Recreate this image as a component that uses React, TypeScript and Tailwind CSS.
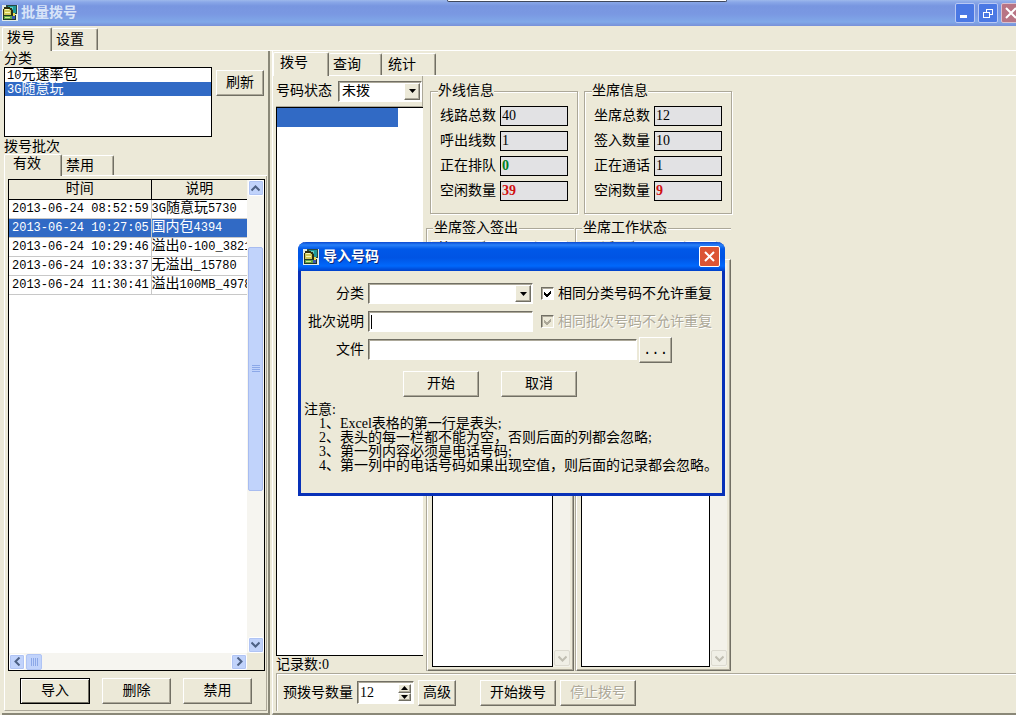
import type { ReactNode } from "react";

const batches = [
  { time: "2013-06-24 08:52:59", note: "3G随意玩5730" },
  { time: "2013-06-24 10:27:05", note: "国内包4394" },
  { time: "2013-06-24 10:29:46", note: "溢出0-100_3821" },
  { time: "2013-06-24 10:33:37", note: "无溢出_15780" },
  { time: "2013-06-24 11:30:41", note: "溢出100MB_4978" },
];

const lines = [
  { id: "line-total", label: "线路总数", value: "40", tone: "" },
  { id: "line-out", label: "呼出线数", value: "1", tone: "" },
  { id: "line-queue", label: "正在排队", value: "0", tone: "font-bold text-[#008020]" },
  { id: "line-free", label: "空闲数量", value: "39", tone: "font-bold text-[#d01010]" },
];

const seats = [
  { id: "seat-total", label: "坐席总数", value: "12", tone: "" },
  { id: "seat-in", label: "签入数量", value: "10", tone: "" },
  { id: "seat-talk", label: "正在通话", value: "1", tone: "" },
  { id: "seat-free", label: "空闲数量", value: "9", tone: "font-bold text-[#d01010]" },
];

const notes = [
  "1、Excel表格的第一行是表头;",
  "2、表头的每一栏都不能为空，否则后面的列都会忽略;",
  "3、第一列内容必须是电话号码;",
  "4、第一列中的电话号码如果出现空值，则后面的记录都会忽略。",
];

const raised =
  "border border-t-white border-l-white border-r-[#716f64] border-b-[#716f64] shadow-[inset_-1px_-1px_0_#aca899]";
const sunken =
  "border border-t-[#716f64] border-l-[#716f64] border-r-white border-b-white bg-white shadow-[inset_1px_1px_0_#aca899]";
const groove = "border border-[#aca899] shadow-[1px_1px_0_#fff,inset_1px_1px_0_#fff]";

const AppIcon = () => (
  <svg width="16" height="16" viewBox="0 0 16 16" className="shrink-0" shapeRendering="crispEdges">
    <rect width="16" height="16" fill="#e4ece8" />
    <path d="M4 0h11v9H4z" fill="#284840" />
    <path d="M6 1h8v7H6z" fill="#209898" />
    <path d="M7 2h4v2H7z" fill="#68d0c0" />
    <path d="M1 4h1V2h6v1h2v2h1v6H1z" fill="#303010" />
    <path d="M2 4h6v1h1v5H2z" fill="#d0c858" />
    <path d="M3 4h4v1H3zM3 7h5v1H3z" fill="#f8f8b8" />
    <path d="M1 10h13v5H1z" fill="#203828" />
    <path d="M2 11h8v3H2z" fill="#60a848" />
    <path d="M3 12h5v1H3z" fill="#d8e890" />
    <path d="M10 11h3v3h-3z" fill="#3858b0" />
    <path d="M11 8h2v3h-2z" fill="#e8d850" />
  </svg>
);

const Chevron = ({ d, color = "#4d6185" }: { d: string; color?: string }) => (
  <svg width="9" height="9" viewBox="0 0 9 9" fill="none" stroke={color} strokeWidth="2">
    <path d={d} />
  </svg>
);

const up = "M0.5 6.5l4-4 4 4";
const down = "M0.5 2.5l4 4 4-4";
const left = "M6.5 0.5l-4 4 4 4";
const right = "M2.5 0.5l4 4-4 4";

const ScrollButton = ({ d, label }: { d: string; label: string }) => (
  <button
    aria-label={label}
    className="flex h-4 w-4 shrink-0 items-center justify-center rounded-xs border border-white bg-[#c1d3fb] shadow-[inset_0_0_0_1px_#b0c4f4]"
  >
    <Chevron d={d} />
  </button>
);

const Button = ({ children, className = "", disabled = false }: { children: ReactNode; className?: string; disabled?: boolean }) => (
  <button
    disabled={disabled}
    className={`h-[26px] shrink-0 bg-[#ece9d8] text-center disabled:text-[#aca899] disabled:[text-shadow:1px_1px_0_#fff] ${raised} ${className}`}
  >
    {children}
  </button>
);

const Tab = ({ children, active = false, className }: { children?: ReactNode; active?: boolean; className: string }) => (
  <button
    role="tab"
    aria-selected={active}
    className={`flex shrink-0 items-center rounded-t-xs border-t border-r border-t-white border-r-[#716f64] bg-[#ece9d8] shadow-[inset_-1px_0_0_#aca899] ${
      active ? "z-10 -mb-px border-l border-l-white pb-1" : ""
    } ${className}`}
  >
    {children}
  </button>
);

const ComboArrow = () => (
  <span className={`pointer-events-none absolute top-0.5 right-0.5 bottom-0.5 flex w-4 items-center justify-center bg-[#ece9d8] ${raised}`}>
    <svg width="7" height="4" viewBox="0 0 7 4">
      <path d="M0 0h7L3.5 4z" fill="#000" />
    </svg>
  </span>
);

// Latin runs are set in the fixed-width face, Chinese stays as it is
const Mixed = ({ text }: { text: string }) => (
  <>
    {text.split(/([\w-]+)/).map((part, i) =>
      i % 2 === 1 ? (
        <span key={i} className="font-['Liberation_Mono',monospace] text-xs leading-[14px]">
          {part}
        </span>
      ) : (
        part
      )
    )}
  </>
);

const Counters = ({ title, items }: { title: string; items: typeof lines }) => (
  <fieldset className={`h-[130px] w-[148px] pl-[9px] ${groove}`}>
    <legend className="-ml-0.5 bg-[#ece9d8]">{title}</legend>
    <div className="flex flex-col gap-[5px] pt-2">
      {items.map((item) => (
        <div key={item.id} className="flex h-5 items-center gap-1">
          <label htmlFor={item.id} className="w-14">
            {item.label}
          </label>
          <input
            id={item.id}
            readOnly
            value={item.value}
            className={`h-5 w-[68px] border border-black bg-[#e2e2e4] px-px ${item.tone}`}
          />
        </div>
      ))}
    </div>
  </fieldset>
);

const SeatList = ({ title, tab, className }: { title: string; tab: string; className: string }) => (
  <fieldset className={`flex flex-col border-t border-l border-[#aca899] shadow-[inset_1px_1px_0_#fff] ${className}`}>
    <legend className="ml-1.5 bg-[#ece9d8] px-px">{title}</legend>
    <div className="flex h-full flex-col">
      <div className="flex h-6 items-end pl-1">
        <Tab active className="h-5 w-[54px] pl-1.5">
          {tab}
        </Tab>
        <Tab className="h-[18px] w-[51px]" />
        <Tab className="h-[18px] w-8" />
      </div>
      <div className={`flex flex-1 p-[3px] pl-1 ${raised}`}>
        <div className="flex-1 border border-black bg-white" />
        <div className="flex w-[17px] flex-col justify-end bg-[#f3f2ea] pb-px">
          <button
            disabled
            aria-label={`${title}向下滚动`}
            className="ml-px flex h-4 w-4 items-center justify-center rounded-xs border border-[#dcdad0] bg-[#f0efe6]"
          >
            <Chevron d={down} color="#c0beb2" />
          </button>
        </div>
      </div>
    </div>
  </fieldset>
);

const TitleBar = () => (
  <header className="relative flex h-[26px] shrink-0 items-center justify-between overflow-hidden bg-[linear-gradient(#9db9eb_0,#8aa8e8_2px,#7896e0_6px,#7a98e2_14px,#80a8e8_22px,#7890d8_26px)] pl-0.5">
    <div className="flex items-center gap-[3px]">
      <AppIcon />
      <h1 className="font-bold text-[#d8e4f8]">批量拨号</h1>
    </div>
    <div className="-mr-[5px] flex gap-[3px]">
      <button aria-label="最小化" className="flex h-5 w-5 items-end rounded-xs border border-[#b8c8f4] bg-[#4a78e4] p-1">
        <span className="h-[3px] w-[7px] bg-white" />
      </button>
      <button aria-label="还原" className="flex h-5 w-5 items-center justify-center rounded-xs border border-[#b8c8f4] bg-[#4a78e4]">
        <svg width="11" height="11" viewBox="0 0 11 11" fill="none" stroke="#fff" shapeRendering="crispEdges">
          <path d="M3.5 4V1.5h6v5H7M3 1h7M0.5 4.5h6v5h-6zM0 4h7" />
        </svg>
      </button>
      <button aria-label="关闭" className="flex h-5 w-5 items-center justify-center rounded-xs border border-[#d8c0d0] bg-[#b87484]">
        <svg width="12" height="12" viewBox="0 0 12 12" stroke="#fff" strokeWidth="2">
          <path d="M1 1l10 10M11 1L1 11" />
        </svg>
      </button>
    </div>
    <div className="absolute top-0 left-[447px] h-0.5 w-[280px] rounded-b-xs border-x border-b border-[#40485c] bg-white" />
  </header>
);

const BatchPanel = () => (
  <section className="flex w-[268px] shrink-0 flex-col border-r-2 border-b-2 border-[#8a8878] pr-px pb-0.5 pl-0.5">
    <div className="flex h-4 items-center">
      <span id="category-label">分类</span>
    </div>
    <div className="flex gap-1">
      <ul role="listbox" aria-labelledby="category-label" className="h-[70px] w-[208px] border border-black bg-white">
        <li role="option" aria-selected={false} className="h-3.5 px-0.5">
          <Mixed text="10元速率包" />
        </li>
        <li role="option" aria-selected className="h-3.5 bg-[#316ac5] px-0.5 text-white">
          <Mixed text="3G随意玩" />
        </li>
      </ul>
      <Button className="mt-[3px] w-12">刷新</Button>
    </div>
    <div className="flex h-[18px] items-center pt-0.5">拨号批次</div>
    <div role="tablist" className="flex h-[21px] items-end border-b border-white">
      <Tab active className="h-[22px] w-[58px] pl-2">
        有效
      </Tab>
      <Tab className="h-5 w-[52px] pl-1">禁用</Tab>
    </div>
    <div className="flex min-h-0 flex-1 flex-col border-r border-b border-l border-r-[#aca899] border-b-[#aca899] border-l-white pt-[3px] pr-px pl-[3px]">
      <div className="flex min-h-0 flex-1 border border-black bg-white">
        <div className="flex min-w-0 flex-1 flex-col">
          <div className="flex-1 overflow-hidden">
            <table className="w-full table-fixed border-collapse">
              <thead>
                <tr className="h-[19px] border-b border-black bg-[#ece9d8]">
                  <th className="w-[142px] border-r border-black font-normal">时间</th>
                  <th className="font-normal">说明</th>
                </tr>
              </thead>
              <tbody>
                {batches.map((row, i) => (
                  <tr key={row.time} className={`h-[19px] border-b border-[#c8c8c8] ${i === 1 ? "bg-[#316ac5] text-white" : ""}`}>
                    <td className="border-r border-[#c8c8c8] pl-[3px] font-['Liberation_Mono',monospace] text-xs leading-[14px] whitespace-nowrap">
                      {row.time}
                    </td>
                    <td className="overflow-hidden whitespace-nowrap">
                      <Mixed text={row.note} />
                    </td>
                  </tr>
                ))}
              </tbody>
            </table>
          </div>
          <div className="flex h-[17px] items-center bg-[#f6f5f0]">
            <ScrollButton d={left} label="向左滚动" />
            <div className="ml-px flex h-4 w-4 items-center justify-center gap-px rounded-xs border border-[#b0c4f4] bg-[#c1d3fb]">
              <span className="h-2 w-px bg-[#8ca8e8]" />
              <span className="h-2 w-px bg-[#8ca8e8]" />
              <span className="h-2 w-px bg-[#8ca8e8]" />
              <span className="h-2 w-px bg-[#8ca8e8]" />
            </div>
            <div className="flex-1" />
            <ScrollButton d={right} label="向右滚动" />
          </div>
        </div>
        <div className="flex w-[17px] flex-col">
          <div className="flex flex-1 flex-col items-center bg-[#f6f5f0]">
            <ScrollButton d={up} label="向上滚动" />
            <div className="flex-[51]" />
            <div className="flex w-[15px] flex-[243] flex-col items-center justify-center gap-px rounded-xs border border-[#a8bcf0] bg-[#c1d3fb]">
              <span className="h-px w-2 bg-[#8ca8e8]" />
              <span className="h-px w-2 bg-[#8ca8e8]" />
              <span className="h-px w-2 bg-[#8ca8e8]" />
              <span className="h-px w-2 bg-[#8ca8e8]" />
            </div>
            <div className="flex-[147]" />
            <ScrollButton d={down} label="向下滚动" />
          </div>
          <div className="h-[17px] bg-[#ece9d8]" />
        </div>
      </div>
      <div className="flex h-[39px] items-center gap-3 pl-3">
        <button className="h-[26px] w-[70px] border border-black bg-[#ece9d8] shadow-[inset_1px_1px_0_#fff,inset_-1px_-1px_0_#716f64]">
          导入
        </button>
        <Button className="w-[69px]">删除</Button>
        <Button className="w-[69px]">禁用</Button>
      </div>
    </div>
  </section>
);

const DialPanel = () => (
  <section className="flex min-w-0 flex-1 flex-col border-b-2 border-l border-b-[#8a8878] border-l-white pb-0.5">
    <div role="tablist" className="mt-0.5 flex h-[23px] items-end border-b border-white">
      <Tab active className="h-6 w-14 pl-1.5">
        拨号
      </Tab>
      <Tab className="h-[22px] w-[53px] pl-1">查询</Tab>
      <Tab className="h-[22px] w-[54px] pl-1.5">统计</Tab>
    </div>
    <div className="flex min-h-0 flex-1 pl-[3px]">
      <div className="flex w-[147px] flex-col">
        <div className="flex h-[31px] items-center gap-1 border-r border-b border-[#aca899]">
          <label htmlFor="state" className="w-[58px] shrink-0 whitespace-nowrap">
            号码状态
          </label>
          <div className="relative w-[84px]">
            <select id="state" className={`block h-[21px] w-full appearance-none pl-[3px] ${sunken}`}>
              <option>未拨</option>
            </select>
            <ComboArrow />
          </div>
        </div>
        <div className="flex-1 border-t border-b border-l border-black bg-white">
          <div className="h-[19px] w-[121px] bg-[#316ac5]" />
        </div>
        <p className="flex h-[17px] items-center">记录数:0</p>
      </div>
      <div className="flex flex-col pl-[3px]">
        <div className="mt-2 flex gap-1.5 pl-1">
          <Counters title="外线信息" items={lines} />
          <Counters title="坐席信息" items={seats} />
        </div>
        <div className="mt-[7px] mb-0.5 flex min-h-0 flex-1 gap-px">
          <SeatList title="坐席签入签出" tab="签入" className="w-[148px]" />
          <SeatList title="坐席工作状态" tab="通话" className="w-[156px]" />
        </div>
      </div>
    </div>
    <div className="ml-[3px] flex h-[38px] items-center border-t border-l border-[#aca899] pl-1.5 shadow-[inset_1px_1px_0_#fff]">
      <label htmlFor="amount">预拨号数量</label>
      <div className={`ml-1 flex h-[23px] w-[57px] p-0.5 ${sunken}`}>
        <input id="amount" defaultValue="12" className="w-10 min-w-0 outline-none" />
        <div className="flex w-[13px] flex-col">
          <button aria-label="增加" className={`flex flex-1 items-center justify-center bg-[#ece9d8] ${raised}`}>
            <svg width="7" height="4" viewBox="0 0 7 4">
              <path d="M0 4h7L3.5 0z" />
            </svg>
          </button>
          <button aria-label="减少" className={`flex flex-1 items-center justify-center bg-[#ece9d8] ${raised}`}>
            <svg width="7" height="4" viewBox="0 0 7 4">
              <path d="M0 0h7L3.5 4z" />
            </svg>
          </button>
        </div>
      </div>
      <Button className="ml-1 w-[38px]">高级</Button>
      <Button className="ml-6 w-[76px]">开始拨号</Button>
      <Button disabled className="ml-1 w-[76px]">
        停止拨号
      </Button>
    </div>
  </section>
);

const CheckBox = ({ id, label, disabled = false }: { id: string; label: string; disabled?: boolean }) => (
  <div className="ml-2 flex items-center gap-1">
    <span className="grid h-[13px] w-[13px] place-items-center">
      <input
        id={id}
        type="checkbox"
        defaultChecked
        disabled={disabled}
        className={`peer col-start-1 row-start-1 h-[13px] w-[13px] appearance-none disabled:bg-[#ece9d8] ${sunken}`}
      />
      <svg
        width="7"
        height="7"
        viewBox="0 0 7 7"
        className="pointer-events-none invisible col-start-1 row-start-1 peer-checked:visible"
        shapeRendering="crispEdges"
      >
        <path d="M0 2v3l2 2h1l4-4V0L3 4H2z" fill={disabled ? "#aca899" : "#000"} />
      </svg>
    </span>
    <label htmlFor={id} className={`whitespace-nowrap ${disabled ? "text-[#aca899] [text-shadow:1px_1px_0_#fff]" : ""}`}>
      {label}
    </label>
  </div>
);

const ImportDialog = () => (
  <div
    role="dialog"
    aria-labelledby="import-title"
    className="absolute top-[242px] left-[298px] z-20 flex h-[254px] w-[427px] flex-col rounded-t-lg border-[3px] border-t-0 border-[#0831b8] bg-[#ece9d8]"
  >
    <div className="-mx-[3px] flex h-[29px] items-center justify-between rounded-t-lg bg-[linear-gradient(#0a48d0_0,#2880f8_3px,#0058e8_7px,#0054e4_16px,#0068fc_24px,#0040c8_29px)] pr-[5px] pl-[5px]">
      <div className="flex items-center gap-1">
        <AppIcon />
        <h2 id="import-title" className="font-bold text-white [text-shadow:1px_1px_0_#0a2a80]">
          导入号码
        </h2>
      </div>
      <button aria-label="关闭" className="flex h-[21px] w-[21px] items-center justify-center rounded-xs border border-white bg-[#dc5434]">
        <svg width="11" height="11" viewBox="0 0 11 11" stroke="#fff" strokeWidth="2">
          <path d="M1 1l9 9M10 1l-9 9" />
        </svg>
      </button>
    </div>
    <div className="flex flex-col gap-[7px] pt-3">
      <div className="flex h-[21px] items-center">
        <label htmlFor="kind" className="w-[63px] text-right">
          分类
        </label>
        <div className="relative ml-1 w-[165px]">
          <select id="kind" defaultValue="" className={`block h-[21px] w-full appearance-none ${sunken}`}>
            <option value="" />
            <option>3G随意玩</option>
          </select>
          <ComboArrow />
        </div>
        <CheckBox id="unique-kind" label="相同分类号码不允许重复" />
      </div>
      <div className="flex h-[21px] items-center">
        <label htmlFor="batch" className="w-[63px] text-right">
          批次说明
        </label>
        <div className={`ml-1 flex h-[21px] w-[165px] items-center pl-0.5 ${sunken}`}>
          <span className="h-3.5 w-px bg-black" />
          <input id="batch" className="min-w-0 flex-1 outline-none" />
        </div>
        <CheckBox id="unique-batch" label="相同批次号码不允许重复" disabled />
      </div>
      <div className="flex h-[21px] items-center">
        <label htmlFor="file" className="w-[63px] text-right">
          文件
        </label>
        <input id="file" className={`ml-1 h-[21px] w-[269px] ${sunken}`} />
        <Button className="ml-0.5 w-[33px] font-['Liberation_Mono',monospace]">...</Button>
      </div>
    </div>
    <div className="mt-[11px] flex gap-[22px] pl-[102px]">
      <Button className="w-[76px]">开始</Button>
      <Button className="w-[76px]">取消</Button>
    </div>
    <div className="mt-1.5 pl-[3px]">
      <p>注意:</p>
      <div className="pl-[15px]">
        {notes.map((note) => (
          <p key={note} className="whitespace-nowrap">
            {note}
          </p>
        ))}
      </div>
    </div>
  </div>
);

const App = () => {
  return (
    <div
      lang="zh-CN"
      className="relative flex h-screen min-h-[600px] flex-col overflow-hidden bg-[#ece9d8] font-['Liberation_Serif','Noto_Sans_CJK_SC',serif] text-sm leading-[14px] text-black"
    >
      <TitleBar />
      <div role="tablist" className="flex h-[25px] shrink-0 items-end border-b border-white pl-0.5">
        <Tab active className="h-6 w-[50px] pl-1">
          拨号
        </Tab>
        <Tab className="h-[22px] w-[46px] pl-1">设置</Tab>
      </div>
      <main className="flex min-h-0 flex-1 gap-0.5 pl-0.5">
        <BatchPanel />
        <DialPanel />
      </main>
      <ImportDialog />
    </div>
  );
};

export default App;
